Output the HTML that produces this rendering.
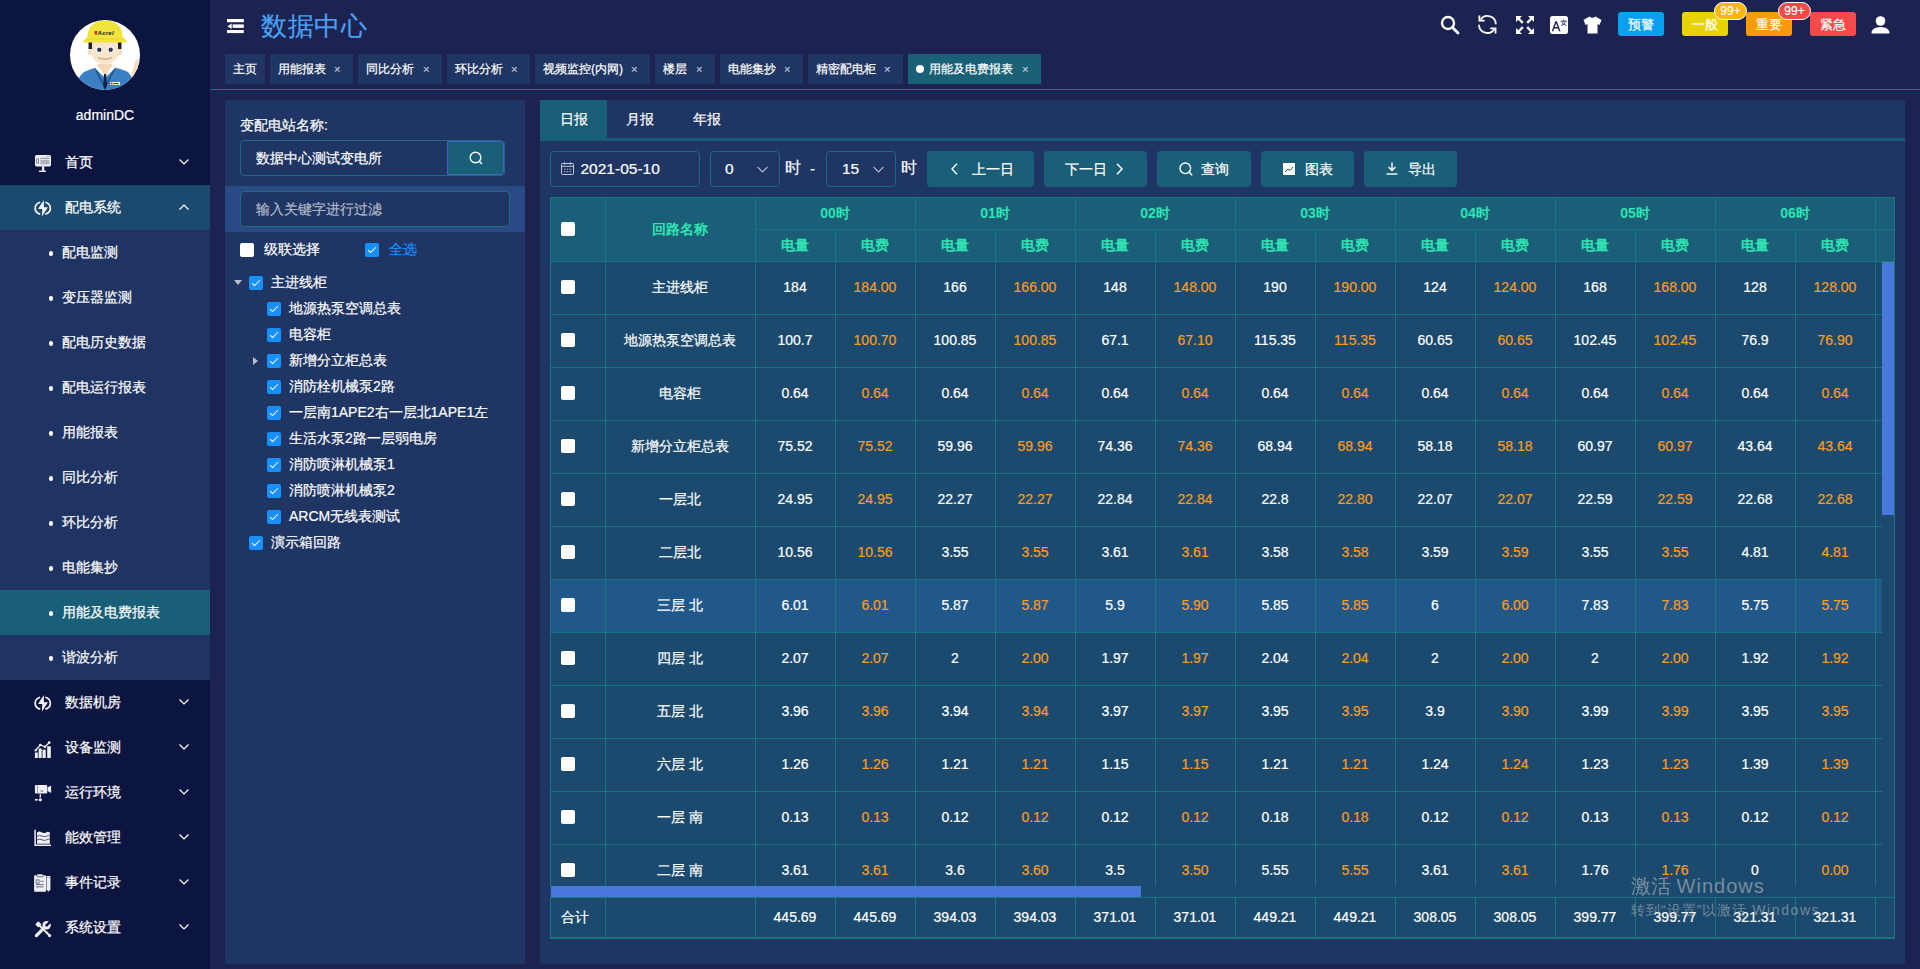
<!DOCTYPE html>
<html><head><meta charset="utf-8"><title>数据中心</title><style>
*{margin:0;padding:0;box-sizing:border-box}
html,body{width:1920px;height:969px;overflow:hidden}
body{background:#1d2350;-webkit-text-stroke:0.2px currentColor;font-family:"Liberation Sans",sans-serif;color:#fff;position:relative;font-size:14px}
.a{position:absolute}
.side{left:0;top:0;width:210px;height:969px;background:#0c1440}
.mi{position:absolute;left:0;width:210px;height:45px;line-height:45px;font-size:14px;color:#fff}
.mi .ic{position:absolute;left:34px;top:14px;width:18px;height:18px}
.mi .tx{position:absolute;left:65px;top:0}
.mi .cv{position:absolute;left:179px;top:19px;width:10px;height:6px}
.sub{position:absolute;left:0;width:210px;height:45px;line-height:45px;font-size:14px;color:#fff}
.sub .dot{position:absolute;left:48.6px;top:21.4px;width:4.6px;height:4.6px;border-radius:50%;background:#fff}
.sub .tx{position:absolute;left:62px;top:0}
.tab{position:absolute;top:54px;height:30px;line-height:30px;background:#1f3564;font-size:12px;color:#fff;padding-left:8px;white-space:nowrap}
.tab .x{position:absolute;top:0;font-size:11px;color:#c8cedc}
.hbtn{position:absolute;top:12px;height:24px;line-height:24px;padding-top:1px;border-radius:3px;font-size:13px;color:#fff;text-align:center;width:46px}
.badge{position:absolute;top:2px;height:18px;line-height:16px;border-radius:9px;border:1px solid #fff;font-size:12px;color:#fff;text-align:center;width:33px}
.panel{background:#1f3564;border-radius:2px}
.inp{position:absolute;border:1px solid #1a6e7c;border-radius:4px;background:#1f3564}
.cb{position:absolute;width:14px;height:14px;border-radius:2px;background:#fff}
.cbc{position:absolute;width:14px;height:14px;border-radius:2px;background:#1890ff}
.cbc:after{content:"";position:absolute;left:4.8px;top:1.9px;width:3px;height:7px;border:solid #fff;border-width:0 1px 1px 0;transform:rotate(45deg)}
.tr{position:absolute;font-size:14px;line-height:26px;height:26px;color:#fff;white-space:nowrap}
.btn{position:absolute;top:151px;height:36px;line-height:36px;background:#1a5f78;border-radius:4px;font-size:14px;color:#fff}
.g{position:absolute;background:#18747f}
.cell{position:absolute;text-align:center;font-size:14px;white-space:nowrap}
.wm{-webkit-text-stroke:0}</style></head>
<body>
<div class="a side">
<svg class="a" style="left:70px;top:20px" width="70" height="70" viewBox="0 0 70 70">
<defs><clipPath id="cc"><circle cx="35" cy="35" r="35"/></clipPath></defs>
<circle cx="35" cy="35" r="35" fill="#fff"/>
<g clip-path="url(#cc)">
<path d="M61 57 Q63 46 66 40 Q70 38 70 44 L70 60 Z" fill="#f6dcc0"/>
<path d="M4 75 Q6 58 14 52 Q22 48 30 47 L35 52 L40 47 Q50 48 58 52 Q64 58 66 75 Z" fill="#3b80c4"/>
<path d="M25 48 L34 66 M45 48 L36 66" stroke="#22508a" stroke-width="1.6" fill="none"/>
<path d="M27.5 44 H42 V49 L35 55 L27.5 49 Z" fill="#f6d9b8"/>
<path d="M25 48 L27.5 46 L35 55 L42.5 46 L45 48 L35 58 Z" fill="#fff"/>
<path d="M34 54 H36.2 L37 66 L35 70 L33.2 66 Z" fill="#142040"/>
<rect x="40" y="62" width="10" height="3" fill="#fff"/><rect x="40.5" y="62.5" width="2" height="2" fill="#e02020"/><rect x="43" y="63" width="6" height="1.2" fill="#555"/>
<ellipse cx="20" cy="32" rx="2.2" ry="3.2" fill="#f6dcc0"/><ellipse cx="50" cy="32" rx="2.2" ry="3.2" fill="#f6dcc0"/>
<path d="M19.5 22 Q19.5 44 35 44 Q50.5 44 50.5 22 Z" fill="#f9e5cc"/>
<rect x="18.5" y="22" width="3.5" height="7" fill="#222"/><rect x="48" y="22" width="3.5" height="7" fill="#222"/>
<circle cx="29" cy="29.5" r="3" fill="#fff"/><circle cx="41" cy="29.5" r="3" fill="#fff"/>
<circle cx="29.3" cy="29.8" r="2.2" fill="#2c3a55"/><circle cx="40.7" cy="29.8" r="2.2" fill="#2c3a55"/>
<path d="M28 37.5 Q35 41 42 37.5" stroke="#a06a4a" stroke-width="0.7" fill="none"/>
<path d="M17 20 Q17 0.5 35 0.5 Q53 0.5 53 20 Z" fill="#f1e43c"/>
<path d="M13 22.5 Q14 17.5 20 17.5 H50 Q56 17.5 57 22.5 Z" fill="#f1e43c"/>
<path d="M16 19 H54" stroke="#d8c830" stroke-width=".6"/>
<path d="M24.5 11 L27.5 11 L26.5 15 L24.5 14 Z" fill="#e02828"/>
<text x="27.6" y="15.2" font-family="Liberation Sans" font-size="6" font-weight="bold" font-style="italic" fill="#222" textLength="16" style="-webkit-text-stroke:0">Acrel</text>
</g></svg>
<div class="a" style="left:0;top:105px;width:210px;text-align:center;font-size:14px;line-height:20px">adminDC</div>
<div class="mi" style="top:140px"><svg class="ic" viewBox="0 0 18 18"><rect x="1" y="1" width="16" height="11.4" rx="1.6" fill="#f0f0f4"/><rect x="2.6" y="4.6" width="1.9" height="4.8" rx=".5" fill="none" stroke="#0c1440" stroke-width=".7" opacity=".7"/><path d="M6.3 4.3h9.2" stroke="#0c1440" stroke-width=".8" opacity=".6"/><rect x="6.3" y="5.8" width="9.2" height="4.6" fill="#0c1440" opacity=".28"/><circle cx="13.3" cy="2.6" r=".5" fill="#0c1440" opacity=".6"/><circle cx="15" cy="2.6" r=".5" fill="#0c1440" opacity=".6"/><rect x="8" y="12.4" width="2.2" height="4.3" fill="#f0f0f4"/><rect x="4.8" y="16.4" width="7.4" height="1.6" rx=".8" fill="#f0f0f4"/></svg><span class="tx">首页</span><svg class="cv" viewBox="0 0 10 6"><path d="M0.5 0.5 L5 5 L9.5 0.5" stroke="#fff" stroke-width="1.2" fill="none"/></svg></div>
<div class="mi" style="top:185px;background:#1b4a6e"><svg class="ic" style="top:15px" viewBox="0 0 18 18"><path d="M6.2 2.27A7.6 6.3 0 0 0 6.2 14.13" stroke="#f4f4f8" stroke-width="1.7" fill="none"/><path d="M11.3 2.27A7.6 6.3 0 0 1 11.3 14.13" stroke="#f4f4f8" stroke-width="1.7" fill="none"/><path d="M9.8 0 L4 8.9 H8.3 L7.8 16.8 L13.9 7.3 H9.9 Z" fill="#f4f4f8"/></svg><span class="tx">配电系统</span><svg class="cv" viewBox="0 0 10 6"><path d="M0.5 5.5 L5 1 L9.5 5.5" stroke="#fff" stroke-width="1.2" fill="none"/></svg></div>
<div class="a" style="left:0;top:230px;width:210px;height:450px;background:#1f3463"></div>
<div class="sub" style="top:230px;"><span class="dot"></span><span class="tx">配电监测</span></div>
<div class="sub" style="top:275px;"><span class="dot"></span><span class="tx">变压器监测</span></div>
<div class="sub" style="top:320px;"><span class="dot"></span><span class="tx">配电历史数据</span></div>
<div class="sub" style="top:365px;"><span class="dot"></span><span class="tx">配电运行报表</span></div>
<div class="sub" style="top:410px;"><span class="dot"></span><span class="tx">用能报表</span></div>
<div class="sub" style="top:455px;"><span class="dot"></span><span class="tx">同比分析</span></div>
<div class="sub" style="top:500px;"><span class="dot"></span><span class="tx">环比分析</span></div>
<div class="sub" style="top:545px;"><span class="dot"></span><span class="tx">电能集抄</span></div>
<div class="sub" style="top:590px;background:#195f77;"><span class="dot"></span><span class="tx">用能及电费报表</span></div>
<div class="sub" style="top:635px;"><span class="dot"></span><span class="tx">谐波分析</span></div>
<div class="mi" style="top:680px"><svg class="ic" style="top:15px" viewBox="0 0 18 18"><path d="M6.2 2.27A7.6 6.3 0 0 0 6.2 14.13" stroke="#f4f4f8" stroke-width="1.7" fill="none"/><path d="M11.3 2.27A7.6 6.3 0 0 1 11.3 14.13" stroke="#f4f4f8" stroke-width="1.7" fill="none"/><path d="M9.8 0 L4 8.9 H8.3 L7.8 16.8 L13.9 7.3 H9.9 Z" fill="#f4f4f8"/></svg><span class="tx">数据机房</span><svg class="cv" viewBox="0 0 10 6"><path d="M0.5 0.5 L5 5 L9.5 0.5" stroke="#fff" stroke-width="1.2" fill="none"/></svg></div>
<div class="mi" style="top:725px"><svg class="ic" style="top:15px" viewBox="0 0 18 18"><rect x="0.9" y="12.5" width="2.9" height="5.5" fill="#f0f0f4"/><rect x="4.6" y="8.5" width="3.1" height="9.5" fill="#f0f0f4"/><rect x="8.5" y="9.6" width="3.2" height="8.4" fill="#f0f0f4"/><rect x="13.2" y="6.3" width="3.6" height="11.7" fill="#f0f0f4"/><path d="M1.6 10.3 L6.3 5 L11 6.8 L15.2 2.8" stroke="#f0f0f4" stroke-width="1.3" fill="none"/><circle cx="1.8" cy="10.2" r="1.2" fill="#f0f0f4"/><circle cx="6.3" cy="5" r="1.3" fill="#f0f0f4"/><circle cx="11" cy="6.8" r="1.3" fill="#f0f0f4"/><circle cx="15.2" cy="2.6" r="1.4" fill="#f0f0f4"/></svg><span class="tx">设备监测</span><svg class="cv" viewBox="0 0 10 6"><path d="M0.5 0.5 L5 5 L9.5 0.5" stroke="#fff" stroke-width="1.2" fill="none"/></svg></div>
<div class="mi" style="top:770px"><svg class="ic" viewBox="0 0 18 18"><rect x="0.9" y="1" width="12.3" height="8.4" rx="1.2" fill="#f0f0f4"/><path d="M3.4 1.5v7.4" stroke="#0c1440" stroke-width=".6" opacity=".7"/><rect x="6.6" y="6.6" width="2.6" height=".9" fill="#0c1440" opacity=".7"/><path d="M13.6 3.6 L17.1 1.4 V9.1 L13.6 7.1 Z" fill="#f0f0f4"/><rect x="5.6" y="10.2" width="1.4" height="3.4" fill="#f0f0f4"/><circle cx="6.3" cy="15.8" r="1.6" fill="#f0f0f4"/><rect x="0.9" y="15" width="2.9" height="1.6" fill="#f0f0f4"/></svg><span class="tx">运行环境</span><svg class="cv" viewBox="0 0 10 6"><path d="M0.5 0.5 L5 5 L9.5 0.5" stroke="#fff" stroke-width="1.2" fill="none"/></svg></div>
<div class="mi" style="top:815px"><svg class="ic" viewBox="0 0 18 18"><path d="M1.1 0.8 V16.3 H17" stroke="#f0f0f4" stroke-width="1.5" fill="none"/><path d="M3 3.6 Q5.2 1.8 7.5 3.2 T12 3.4 T15.8 3.4 V14.7 H3 Z" fill="#f0f0f4"/><path d="M3 7.4 Q5.5 5.6 8 7 T12.5 7.2 T15.8 6.8" stroke="#0c1440" stroke-width=".9" fill="none" opacity=".75"/><path d="M3 11 Q5.5 9.4 8 10.8 T12.5 10.8 T15.8 10.4" stroke="#0c1440" stroke-width=".9" fill="none" opacity=".75"/></svg><span class="tx">能效管理</span><svg class="cv" viewBox="0 0 10 6"><path d="M0.5 0.5 L5 5 L9.5 0.5" stroke="#fff" stroke-width="1.2" fill="none"/></svg></div>
<div class="mi" style="top:860px"><svg class="ic" viewBox="0 0 18 18"><rect x="0.1" y="1.3" width="11.9" height="16.4" rx="1" fill="#f0f0f4"/><rect x="2.8" y="0" width="6.4" height="2.8" rx="1" fill="#f0f0f4" stroke="#0c1440" stroke-width=".6"/><rect x="2.1" y="5.9" width="2.9" height="3.3" fill="none" stroke="#0c1440" stroke-width=".8" opacity=".7"/><path d="M6.3 7.3h3.3M2.1 10.7h7.5M2.1 12.9h7.5" stroke="#0c1440" stroke-width=".9" opacity=".7"/><path d="M12.5 1.9 H16.4 V15.4 L14.45 17.8 L12.5 15.4 Z" fill="#f0f0f4"/><path d="M12.5 3.3 H16.4" stroke="#0c1440" stroke-width=".5" opacity=".6"/></svg><span class="tx">事件记录</span><svg class="cv" viewBox="0 0 10 6"><path d="M0.5 0.5 L5 5 L9.5 0.5" stroke="#fff" stroke-width="1.2" fill="none"/></svg></div>
<div class="mi" style="top:905px"><svg class="ic" style="top:15px" viewBox="0 0 18 18"><path d="M2.4 15.6 L10.6 7.4" stroke="#f0f0f4" stroke-width="3.2" stroke-linecap="round"/><circle cx="12.6" cy="5.3" r="4.2" fill="#f0f0f4"/><path d="M12.6 5.3 L16.8 1.1" stroke="#0c1440" stroke-width="2.6" stroke-linecap="round"/><path d="M1.2 4.3 L4.3 1.2 L7.4 4.3 L4.3 7.4 Z" fill="#f0f0f4"/><path d="M5 5 L13.4 13.4" stroke="#f0f0f4" stroke-width="2"/><path d="M11.6 13.2 L13.2 11.6 L16.8 15.6 L15.6 16.8 Z" fill="#f0f0f4"/><circle cx="15.6" cy="15.6" r="1.6" fill="#f0f0f4"/></svg><span class="tx">系统设置</span><svg class="cv" viewBox="0 0 10 6"><path d="M0.5 0.5 L5 5 L9.5 0.5" stroke="#fff" stroke-width="1.2" fill="none"/></svg></div>
</div>
<svg class="a" style="left:227px;top:19px" width="17" height="15" viewBox="0 0 17 15"><rect x="0" y="0" width="16.8" height="3.2" fill="#fff"/><rect x="5.6" y="5.4" width="11.2" height="3.5" fill="#fff"/><rect x="0" y="11" width="16.8" height="3.1" fill="#fff"/><path d="M0.4 7.2 L4.7 4.4 V10 Z" fill="#fff"/></svg>
<div class="a" style="left:261px;top:8px;font-size:26px;line-height:36px;color:#4aa0f2;letter-spacing:0.6px">数据中心</div>
<svg class="a" style="left:1440px;top:15px" width="20" height="20" viewBox="0 0 20 20"><circle cx="8" cy="8" r="6" stroke="#fff" stroke-width="2.4" fill="none"/><path d="M12.5 12.5 L18 18" stroke="#fff" stroke-width="2.8" stroke-linecap="round"/></svg>
<svg class="a" style="left:1477px;top:14px" width="21" height="21" viewBox="0 0 21 21"><path d="M3.6 5.6 A8.3 8.3 0 0 1 18.8 10.3" stroke="#fff" stroke-width="1.8" fill="none"/><path d="M2 10.7 A8.3 8.3 0 0 0 17.2 15.2" stroke="#fff" stroke-width="1.8" fill="none"/><path d="M2.4 1.4 V6.6 H7.6" stroke="#fff" stroke-width="1.8" fill="none"/><path d="M18.5 19.6 V14.4 H13.3" stroke="#fff" stroke-width="1.8" fill="none"/></svg>
<svg class="a" style="left:1516px;top:16px" width="18" height="18" viewBox="0 0 18 18"><g fill="#fff"><path d="M0 0 H6 L0 6 Z"/><path d="M18 0 V6 L12 0 Z"/><path d="M0 18 V12 L6 18 Z"/><path d="M18 18 H12 L18 12 Z"/></g><g stroke="#fff" stroke-width="2.4"><path d="M2 2 L6.8 6.8"/><path d="M16 2 L11.2 6.8"/><path d="M2 16 L6.8 11.2"/><path d="M16 16 L11.2 11.2"/></g></svg>
<svg class="a" style="left:1550px;top:16px" width="18" height="18" viewBox="0 0 18 18"><rect x="0" y="0" width="18" height="18" rx="2.5" fill="#fff"/><path d="M1.8 15.2 L5.4 5.2 H6.9 L10.5 15.2 H9 L8 12.4 H4.3 L3.3 15.2 Z M4.8 11 H7.5 L6.15 7.2 Z" fill="#1d2350"/><path d="M10.6 5.2 H16.9 M13.75 3.6 V5.2 M11.6 5.6 Q13 8.6 16.4 9.6 M15.6 5.6 Q14.4 8.6 11 9.6" stroke="#1d2350" stroke-width=".85" fill="none"/></svg>
<svg class="a" style="left:1583px;top:16px" width="19" height="18" viewBox="0 0 19 18"><path d="M6.5 0.5 Q9.5 3 12.5 0.5 L18.5 4 L16.5 9 L14.5 8 V17.5 H4.5 V8 L2.5 9 L0.5 4 Z" fill="#fff"/></svg>
<div class="hbtn" style="left:1618px;background:#06a0ee">预警</div>
<div class="hbtn" style="left:1682px;background:#e8d200">一般</div>
<div class="hbtn" style="left:1746px;background:#fb9b0b">重要</div>
<div class="hbtn" style="left:1810px;background:#f64a4a">紧急</div>
<div class="badge" style="left:1714px;background:#fbb60a">99+</div>
<div class="badge" style="left:1778px;background:#f44949">99+</div>
<svg class="a" style="left:1871px;top:16px" width="19" height="18" viewBox="0 0 19 18"><circle cx="9.5" cy="5" r="4.8" fill="#fff"/><path d="M0.5 17.5 Q0.5 11 9.5 11 Q18.5 11 18.5 17.5 Z" fill="#fff"/></svg>
<div class="tab" style="left:225px;width:40px">主页</div>
<div class="tab" style="left:270px;width:83px">用能报表<span class="x" style="left:64px">×</span></div>
<div class="tab" style="left:358px;width:84px">同比分析<span class="x" style="left:65px">×</span></div>
<div class="tab" style="left:447px;width:83px">环比分析<span class="x" style="left:64px">×</span></div>
<div class="tab" style="left:535px;width:115px">视频监控(内网)<span class="x" style="left:96px">×</span></div>
<div class="tab" style="left:655px;width:60px">楼层<span class="x" style="left:41px">×</span></div>
<div class="tab" style="left:720px;width:83px">电能集抄<span class="x" style="left:64px">×</span></div>
<div class="tab" style="left:808px;width:95px">精密配电柜<span class="x" style="left:76px">×</span></div>
<div class="tab" style="left:908px;width:133px;background:#1a6178;padding-left:21px"><span class="a" style="left:8px;top:11px;width:8px;height:8px;border-radius:50%;background:#fff"></span>用能及电费报表<span class="x" style="left:114px">×</span></div>
<div class="a" style="left:210px;top:89px;width:1710px;height:1px;background:#177482"></div>
<div class="a panel" style="left:225px;top:100px;width:300px;height:864px"></div>
<div class="a" style="left:240px;top:115px;font-size:14px;line-height:20px">变配电站名称:</div>
<div class="inp" style="left:240px;top:140px;width:265px;height:36px;border-color:#1a6e7c"></div>
<div class="a" style="left:447px;top:141px;width:57px;height:34px;background:#1a5f78;border:1px solid #4a5fc8;border-radius:0 4px 4px 0"></div>
<svg class="a" style="left:469px;top:151px" width="14" height="14" viewBox="0 0 14 14"><circle cx="6.5" cy="6.5" r="5.3" stroke="#fff" stroke-width="1.4" fill="none"/><path d="M10.3 10.3 L13 13" stroke="#fff" stroke-width="1.4"/></svg>
<div class="a" style="left:256px;top:148px;font-size:14px;line-height:20px">数据中心测试变电所</div>
<div class="a" style="left:225px;top:186px;width:300px;height:46px;background:#2a4a85"></div>
<div class="inp" style="left:240px;top:191px;width:270px;height:36px;background:#1f3564"></div>
<div class="a" style="left:256px;top:199px;font-size:14px;line-height:20px;color:#b4bac8">输入关键字进行过滤</div>
<div class="cb" style="left:240px;top:243px"></div>
<div class="tr" style="left:264px;top:236px">级联选择</div>
<div class="cbc" style="left:365px;top:243px"></div>
<div class="tr" style="left:389px;top:236px;color:#1890ff">全选</div>
<svg class="a" style="left:234px;top:280px" width="8" height="6" viewBox="0 0 8 6"><path d="M0 0 H8 L4 5 Z" fill="#b8bcc8"/></svg>
<div class="cbc" style="left:249px;top:276px"></div><div class="tr" style="left:271px;top:269px">主进线柜</div>
<div class="cbc" style="left:267px;top:302px"></div><div class="tr" style="left:289px;top:295px">地源热泵空调总表</div>
<div class="cbc" style="left:267px;top:328px"></div><div class="tr" style="left:289px;top:321px">电容柜</div>
<svg class="a" style="left:253px;top:357px" width="6" height="8" viewBox="0 0 6 8"><path d="M0 0 V8 L5 4 Z" fill="#b8bcc8"/></svg>
<div class="cbc" style="left:267px;top:354px"></div><div class="tr" style="left:289px;top:347px">新增分立柜总表</div>
<div class="cbc" style="left:267px;top:380px"></div><div class="tr" style="left:289px;top:373px">消防栓机械泵2路</div>
<div class="cbc" style="left:267px;top:406px"></div><div class="tr" style="left:289px;top:399px">一层南1APE2右一层北1APE1左</div>
<div class="cbc" style="left:267px;top:432px"></div><div class="tr" style="left:289px;top:425px">生活水泵2路一层弱电房</div>
<div class="cbc" style="left:267px;top:458px"></div><div class="tr" style="left:289px;top:451px">消防喷淋机械泵1</div>
<div class="cbc" style="left:267px;top:484px"></div><div class="tr" style="left:289px;top:477px">消防喷淋机械泵2</div>
<div class="cbc" style="left:267px;top:510px"></div><div class="tr" style="left:289px;top:503px">ARCM无线表测试</div>
<div class="cbc" style="left:249px;top:536px"></div><div class="tr" style="left:271px;top:529px">演示箱回路</div>
<div class="a panel" style="left:540px;top:100px;width:1365px;height:864px"></div>
<div class="a" style="left:540px;top:100px;width:67px;height:38px;background:#195e78"></div>
<div class="a" style="left:540px;top:138px;width:1365px;height:3px;background:#195e78"></div>
<div class="a" style="left:560px;top:109px;font-size:14px;line-height:20px">日报</div>
<div class="a" style="left:626px;top:109px;font-size:14px;line-height:20px">月报</div>
<div class="a" style="left:693px;top:109px;font-size:14px;line-height:20px">年报</div>
<div class="inp" style="left:550px;top:151px;width:150px;height:36px;border-color:#176d7a"></div>
<svg class="a" style="left:561px;top:162px" width="13" height="13" viewBox="0 0 13 13"><rect x="0.5" y="1.5" width="12" height="11" rx="0.8" stroke="#c4c8d4" stroke-width="1" fill="none"/><path d="M0.5 4.3h12" stroke="#c4c8d4" stroke-width="1"/><path d="M3.6 0.3v2.4M9.4 0.3v2.4" stroke="#c4c8d4" stroke-width="1"/><path d="M3 7.2h1.4M5.8 7.2h1.4M8.6 7.2h1.4M3 9.6h1.4M5.8 9.6h1.4M8.6 9.6h1.4" stroke="#c4c8d4" stroke-width=".9"/></svg>
<div class="a" style="left:580.5px;top:158.5px;font-size:15.5px;line-height:20px">2021-05-10</div>
<div class="inp" style="left:710px;top:151px;width:70px;height:36px;border-color:#176d7a"></div>
<div class="a" style="left:725px;top:158.5px;font-size:15.5px;line-height:20px">0</div>
<svg class="a" style="left:757px;top:166px" width="11" height="7" viewBox="0 0 11 7"><path d="M0.5 0.8 L5.5 5.8 L10.5 0.8" stroke="#b8bcc8" stroke-width="1.2" fill="none"/></svg>
<div class="a" style="left:785px;top:158px;font-size:16px;line-height:20px">时</div>
<div class="a" style="left:810px;top:159px;font-size:15px;line-height:20px">-</div>
<div class="inp" style="left:826px;top:151px;width:70px;height:36px;border-color:#176d7a"></div>
<div class="a" style="left:842px;top:158.5px;font-size:15.5px;line-height:20px">15</div>
<svg class="a" style="left:873px;top:166px" width="11" height="7" viewBox="0 0 11 7"><path d="M0.5 0.8 L5.5 5.8 L10.5 0.8" stroke="#b8bcc8" stroke-width="1.2" fill="none"/></svg>
<div class="a" style="left:901px;top:158px;font-size:16px;line-height:20px">时</div>
<div class="btn" style="left:927px;width:107px"></div><svg class="a" style="left:951px;top:163px" width="7" height="12" viewBox="0 0 7 12"><path d="M6 0.7 L1 6 L6 11.3" stroke="#fff" stroke-width="1.4" fill="none"/></svg><div class="a" style="left:972px;top:159px;font-size:14px;line-height:20px">上一日</div>
<div class="btn" style="left:1044px;width:103px"></div><svg class="a" style="left:1116px;top:163px" width="7" height="12" viewBox="0 0 7 12"><path d="M1 0.7 L6 6 L1 11.3" stroke="#fff" stroke-width="1.4" fill="none"/></svg><div class="a" style="left:1065px;top:159px;font-size:14px;line-height:20px">下一日</div>
<div class="btn" style="left:1157px;width:94px"></div><svg class="a" style="left:1179px;top:162px" width="14" height="14" viewBox="0 0 14 14"><circle cx="6.3" cy="6.3" r="5.3" stroke="#fff" stroke-width="1.4" fill="none"/><path d="M10 10 L13.2 13.2" stroke="#fff" stroke-width="1.5"/></svg><div class="a" style="left:1201px;top:159px;font-size:14px;line-height:20px">查询</div>
<div class="btn" style="left:1261px;width:93px"></div><svg class="a" style="left:1283px;top:163px" width="12" height="12" viewBox="0 0 12 12"><rect x="0" y="0" width="12" height="12" fill="#fff"/><path d="M2 9 L5 6 L7 7.5 L10 4" stroke="#1a5f78" stroke-width="1" fill="none"/></svg><div class="a" style="left:1305px;top:159px;font-size:14px;line-height:20px">图表</div>
<div class="btn" style="left:1364px;width:93px"></div><svg class="a" style="left:1386px;top:162px" width="12" height="13" viewBox="0 0 12 13"><path d="M6 0.5 V8.5 M2.5 5 L6 8.5 L9.5 5" stroke="#fff" stroke-width="1.4" fill="none"/><path d="M0.5 12 H11.5" stroke="#fff" stroke-width="1.4"/></svg><div class="a" style="left:1408px;top:159px;font-size:14px;line-height:20px">导出</div>
<div class="a" style="left:550px;top:197px;width:1345px;height:64px;background:#1a5e78"></div>
<div class="a" style="left:550px;top:261px;width:1345px;height:677px;background:#1b4a6e"></div>
<div class="a" style="left:550px;top:579px;width:1332px;height:53px;background:#21588a"></div>
<div class="g" style="left:550px;top:197px;width:1px;height:689px"></div>
<div class="g" style="left:550px;top:897px;width:1px;height:40px"></div>
<div class="g" style="left:605px;top:197px;width:1px;height:689px"></div>
<div class="g" style="left:605px;top:897px;width:1px;height:40px"></div>
<div class="g" style="left:755px;top:197px;width:1px;height:689px"></div>
<div class="g" style="left:755px;top:897px;width:1px;height:40px"></div>
<div class="g" style="left:835px;top:229px;width:1px;height:657px"></div>
<div class="g" style="left:835px;top:897px;width:1px;height:40px"></div>
<div class="g" style="left:915px;top:197px;width:1px;height:689px"></div>
<div class="g" style="left:915px;top:897px;width:1px;height:40px"></div>
<div class="g" style="left:995px;top:229px;width:1px;height:657px"></div>
<div class="g" style="left:995px;top:897px;width:1px;height:40px"></div>
<div class="g" style="left:1075px;top:197px;width:1px;height:689px"></div>
<div class="g" style="left:1075px;top:897px;width:1px;height:40px"></div>
<div class="g" style="left:1155px;top:229px;width:1px;height:657px"></div>
<div class="g" style="left:1155px;top:897px;width:1px;height:40px"></div>
<div class="g" style="left:1235px;top:197px;width:1px;height:689px"></div>
<div class="g" style="left:1235px;top:897px;width:1px;height:40px"></div>
<div class="g" style="left:1315px;top:229px;width:1px;height:657px"></div>
<div class="g" style="left:1315px;top:897px;width:1px;height:40px"></div>
<div class="g" style="left:1395px;top:197px;width:1px;height:689px"></div>
<div class="g" style="left:1395px;top:897px;width:1px;height:40px"></div>
<div class="g" style="left:1475px;top:229px;width:1px;height:657px"></div>
<div class="g" style="left:1475px;top:897px;width:1px;height:40px"></div>
<div class="g" style="left:1555px;top:197px;width:1px;height:689px"></div>
<div class="g" style="left:1555px;top:897px;width:1px;height:40px"></div>
<div class="g" style="left:1635px;top:229px;width:1px;height:657px"></div>
<div class="g" style="left:1635px;top:897px;width:1px;height:40px"></div>
<div class="g" style="left:1715px;top:197px;width:1px;height:689px"></div>
<div class="g" style="left:1715px;top:897px;width:1px;height:40px"></div>
<div class="g" style="left:1795px;top:229px;width:1px;height:657px"></div>
<div class="g" style="left:1795px;top:897px;width:1px;height:40px"></div>
<div class="g" style="left:1875px;top:197px;width:1px;height:689px"></div>
<div class="g" style="left:1875px;top:897px;width:1px;height:40px"></div>
<div class="g" style="left:1894px;top:197px;width:1px;height:741px"></div>
<div class="g" style="left:550px;top:197px;width:1345px;height:1px"></div>
<div class="g" style="left:755px;top:229px;width:1139px;height:1px"></div>
<div class="g" style="left:550px;top:261px;width:1345px;height:1px"></div>
<div class="g" style="left:550px;top:314px;width:1332px;height:1px"></div>
<div class="g" style="left:550px;top:367px;width:1332px;height:1px"></div>
<div class="g" style="left:550px;top:420px;width:1332px;height:1px"></div>
<div class="g" style="left:550px;top:473px;width:1332px;height:1px"></div>
<div class="g" style="left:550px;top:526px;width:1332px;height:1px"></div>
<div class="g" style="left:550px;top:579px;width:1332px;height:1px"></div>
<div class="g" style="left:550px;top:632px;width:1332px;height:1px"></div>
<div class="g" style="left:550px;top:685px;width:1332px;height:1px"></div>
<div class="g" style="left:550px;top:738px;width:1332px;height:1px"></div>
<div class="g" style="left:550px;top:791px;width:1332px;height:1px"></div>
<div class="g" style="left:550px;top:844px;width:1332px;height:1px"></div>
<div class="g" style="left:550px;top:897px;width:1345px;height:1px"></div>
<div class="g" style="left:550px;top:937px;width:1345px;height:2px"></div>
<div class="a" style="left:1882px;top:262px;width:12px;height:253px;background:#4878dc"></div>
<div class="a" style="left:551px;top:886px;width:590px;height:11px;background:#4878dc"></div>
<div class="cb" style="left:561px;top:222px"></div>
<div class="cell" style="left:605px;top:197px;width:150px;line-height:64px;color:#2ee4b2;font-weight:bold;-webkit-text-stroke:0">回路名称</div>
<div class="cell" style="left:755px;top:197px;width:160px;line-height:32px;color:#2ee4b2;font-weight:bold;-webkit-text-stroke:0">00时</div>
<div class="cell" style="left:755px;top:229px;width:80px;line-height:32px;color:#2ee4b2;font-weight:bold;-webkit-text-stroke:0">电量</div>
<div class="cell" style="left:835px;top:229px;width:80px;line-height:32px;color:#2ee4b2;font-weight:bold;-webkit-text-stroke:0">电费</div>
<div class="cell" style="left:915px;top:197px;width:160px;line-height:32px;color:#2ee4b2;font-weight:bold;-webkit-text-stroke:0">01时</div>
<div class="cell" style="left:915px;top:229px;width:80px;line-height:32px;color:#2ee4b2;font-weight:bold;-webkit-text-stroke:0">电量</div>
<div class="cell" style="left:995px;top:229px;width:80px;line-height:32px;color:#2ee4b2;font-weight:bold;-webkit-text-stroke:0">电费</div>
<div class="cell" style="left:1075px;top:197px;width:160px;line-height:32px;color:#2ee4b2;font-weight:bold;-webkit-text-stroke:0">02时</div>
<div class="cell" style="left:1075px;top:229px;width:80px;line-height:32px;color:#2ee4b2;font-weight:bold;-webkit-text-stroke:0">电量</div>
<div class="cell" style="left:1155px;top:229px;width:80px;line-height:32px;color:#2ee4b2;font-weight:bold;-webkit-text-stroke:0">电费</div>
<div class="cell" style="left:1235px;top:197px;width:160px;line-height:32px;color:#2ee4b2;font-weight:bold;-webkit-text-stroke:0">03时</div>
<div class="cell" style="left:1235px;top:229px;width:80px;line-height:32px;color:#2ee4b2;font-weight:bold;-webkit-text-stroke:0">电量</div>
<div class="cell" style="left:1315px;top:229px;width:80px;line-height:32px;color:#2ee4b2;font-weight:bold;-webkit-text-stroke:0">电费</div>
<div class="cell" style="left:1395px;top:197px;width:160px;line-height:32px;color:#2ee4b2;font-weight:bold;-webkit-text-stroke:0">04时</div>
<div class="cell" style="left:1395px;top:229px;width:80px;line-height:32px;color:#2ee4b2;font-weight:bold;-webkit-text-stroke:0">电量</div>
<div class="cell" style="left:1475px;top:229px;width:80px;line-height:32px;color:#2ee4b2;font-weight:bold;-webkit-text-stroke:0">电费</div>
<div class="cell" style="left:1555px;top:197px;width:160px;line-height:32px;color:#2ee4b2;font-weight:bold;-webkit-text-stroke:0">05时</div>
<div class="cell" style="left:1555px;top:229px;width:80px;line-height:32px;color:#2ee4b2;font-weight:bold;-webkit-text-stroke:0">电量</div>
<div class="cell" style="left:1635px;top:229px;width:80px;line-height:32px;color:#2ee4b2;font-weight:bold;-webkit-text-stroke:0">电费</div>
<div class="cell" style="left:1715px;top:197px;width:160px;line-height:32px;color:#2ee4b2;font-weight:bold;-webkit-text-stroke:0">06时</div>
<div class="cell" style="left:1715px;top:229px;width:80px;line-height:32px;color:#2ee4b2;font-weight:bold;-webkit-text-stroke:0">电量</div>
<div class="cell" style="left:1795px;top:229px;width:80px;line-height:32px;color:#2ee4b2;font-weight:bold;-webkit-text-stroke:0">电费</div>
<div class="a" style="left:550px;top:261px;width:1332px;height:625px;overflow:hidden">
<div class="cb" style="left:11px;top:19px"></div>
<div class="cell" style="left:55px;top:0px;width:150px;line-height:53px">主进线柜</div>
<div class="cell" style="left:205px;top:0px;width:80px;line-height:53px;color:#fff">184</div>
<div class="cell" style="left:285px;top:0px;width:80px;line-height:53px;color:#f89c1e">184.00</div>
<div class="cell" style="left:365px;top:0px;width:80px;line-height:53px;color:#fff">166</div>
<div class="cell" style="left:445px;top:0px;width:80px;line-height:53px;color:#f89c1e">166.00</div>
<div class="cell" style="left:525px;top:0px;width:80px;line-height:53px;color:#fff">148</div>
<div class="cell" style="left:605px;top:0px;width:80px;line-height:53px;color:#f89c1e">148.00</div>
<div class="cell" style="left:685px;top:0px;width:80px;line-height:53px;color:#fff">190</div>
<div class="cell" style="left:765px;top:0px;width:80px;line-height:53px;color:#f89c1e">190.00</div>
<div class="cell" style="left:845px;top:0px;width:80px;line-height:53px;color:#fff">124</div>
<div class="cell" style="left:925px;top:0px;width:80px;line-height:53px;color:#f89c1e">124.00</div>
<div class="cell" style="left:1005px;top:0px;width:80px;line-height:53px;color:#fff">168</div>
<div class="cell" style="left:1085px;top:0px;width:80px;line-height:53px;color:#f89c1e">168.00</div>
<div class="cell" style="left:1165px;top:0px;width:80px;line-height:53px;color:#fff">128</div>
<div class="cell" style="left:1245px;top:0px;width:80px;line-height:53px;color:#f89c1e">128.00</div>
<div class="cb" style="left:11px;top:72px"></div>
<div class="cell" style="left:55px;top:53px;width:150px;line-height:53px">地源热泵空调总表</div>
<div class="cell" style="left:205px;top:53px;width:80px;line-height:53px;color:#fff">100.7</div>
<div class="cell" style="left:285px;top:53px;width:80px;line-height:53px;color:#f89c1e">100.70</div>
<div class="cell" style="left:365px;top:53px;width:80px;line-height:53px;color:#fff">100.85</div>
<div class="cell" style="left:445px;top:53px;width:80px;line-height:53px;color:#f89c1e">100.85</div>
<div class="cell" style="left:525px;top:53px;width:80px;line-height:53px;color:#fff">67.1</div>
<div class="cell" style="left:605px;top:53px;width:80px;line-height:53px;color:#f89c1e">67.10</div>
<div class="cell" style="left:685px;top:53px;width:80px;line-height:53px;color:#fff">115.35</div>
<div class="cell" style="left:765px;top:53px;width:80px;line-height:53px;color:#f89c1e">115.35</div>
<div class="cell" style="left:845px;top:53px;width:80px;line-height:53px;color:#fff">60.65</div>
<div class="cell" style="left:925px;top:53px;width:80px;line-height:53px;color:#f89c1e">60.65</div>
<div class="cell" style="left:1005px;top:53px;width:80px;line-height:53px;color:#fff">102.45</div>
<div class="cell" style="left:1085px;top:53px;width:80px;line-height:53px;color:#f89c1e">102.45</div>
<div class="cell" style="left:1165px;top:53px;width:80px;line-height:53px;color:#fff">76.9</div>
<div class="cell" style="left:1245px;top:53px;width:80px;line-height:53px;color:#f89c1e">76.90</div>
<div class="cb" style="left:11px;top:125px"></div>
<div class="cell" style="left:55px;top:106px;width:150px;line-height:53px">电容柜</div>
<div class="cell" style="left:205px;top:106px;width:80px;line-height:53px;color:#fff">0.64</div>
<div class="cell" style="left:285px;top:106px;width:80px;line-height:53px;color:#f89c1e">0.64</div>
<div class="cell" style="left:365px;top:106px;width:80px;line-height:53px;color:#fff">0.64</div>
<div class="cell" style="left:445px;top:106px;width:80px;line-height:53px;color:#f89c1e">0.64</div>
<div class="cell" style="left:525px;top:106px;width:80px;line-height:53px;color:#fff">0.64</div>
<div class="cell" style="left:605px;top:106px;width:80px;line-height:53px;color:#f89c1e">0.64</div>
<div class="cell" style="left:685px;top:106px;width:80px;line-height:53px;color:#fff">0.64</div>
<div class="cell" style="left:765px;top:106px;width:80px;line-height:53px;color:#f89c1e">0.64</div>
<div class="cell" style="left:845px;top:106px;width:80px;line-height:53px;color:#fff">0.64</div>
<div class="cell" style="left:925px;top:106px;width:80px;line-height:53px;color:#f89c1e">0.64</div>
<div class="cell" style="left:1005px;top:106px;width:80px;line-height:53px;color:#fff">0.64</div>
<div class="cell" style="left:1085px;top:106px;width:80px;line-height:53px;color:#f89c1e">0.64</div>
<div class="cell" style="left:1165px;top:106px;width:80px;line-height:53px;color:#fff">0.64</div>
<div class="cell" style="left:1245px;top:106px;width:80px;line-height:53px;color:#f89c1e">0.64</div>
<div class="cb" style="left:11px;top:178px"></div>
<div class="cell" style="left:55px;top:159px;width:150px;line-height:53px">新增分立柜总表</div>
<div class="cell" style="left:205px;top:159px;width:80px;line-height:53px;color:#fff">75.52</div>
<div class="cell" style="left:285px;top:159px;width:80px;line-height:53px;color:#f89c1e">75.52</div>
<div class="cell" style="left:365px;top:159px;width:80px;line-height:53px;color:#fff">59.96</div>
<div class="cell" style="left:445px;top:159px;width:80px;line-height:53px;color:#f89c1e">59.96</div>
<div class="cell" style="left:525px;top:159px;width:80px;line-height:53px;color:#fff">74.36</div>
<div class="cell" style="left:605px;top:159px;width:80px;line-height:53px;color:#f89c1e">74.36</div>
<div class="cell" style="left:685px;top:159px;width:80px;line-height:53px;color:#fff">68.94</div>
<div class="cell" style="left:765px;top:159px;width:80px;line-height:53px;color:#f89c1e">68.94</div>
<div class="cell" style="left:845px;top:159px;width:80px;line-height:53px;color:#fff">58.18</div>
<div class="cell" style="left:925px;top:159px;width:80px;line-height:53px;color:#f89c1e">58.18</div>
<div class="cell" style="left:1005px;top:159px;width:80px;line-height:53px;color:#fff">60.97</div>
<div class="cell" style="left:1085px;top:159px;width:80px;line-height:53px;color:#f89c1e">60.97</div>
<div class="cell" style="left:1165px;top:159px;width:80px;line-height:53px;color:#fff">43.64</div>
<div class="cell" style="left:1245px;top:159px;width:80px;line-height:53px;color:#f89c1e">43.64</div>
<div class="cb" style="left:11px;top:231px"></div>
<div class="cell" style="left:55px;top:212px;width:150px;line-height:53px">一层北</div>
<div class="cell" style="left:205px;top:212px;width:80px;line-height:53px;color:#fff">24.95</div>
<div class="cell" style="left:285px;top:212px;width:80px;line-height:53px;color:#f89c1e">24.95</div>
<div class="cell" style="left:365px;top:212px;width:80px;line-height:53px;color:#fff">22.27</div>
<div class="cell" style="left:445px;top:212px;width:80px;line-height:53px;color:#f89c1e">22.27</div>
<div class="cell" style="left:525px;top:212px;width:80px;line-height:53px;color:#fff">22.84</div>
<div class="cell" style="left:605px;top:212px;width:80px;line-height:53px;color:#f89c1e">22.84</div>
<div class="cell" style="left:685px;top:212px;width:80px;line-height:53px;color:#fff">22.8</div>
<div class="cell" style="left:765px;top:212px;width:80px;line-height:53px;color:#f89c1e">22.80</div>
<div class="cell" style="left:845px;top:212px;width:80px;line-height:53px;color:#fff">22.07</div>
<div class="cell" style="left:925px;top:212px;width:80px;line-height:53px;color:#f89c1e">22.07</div>
<div class="cell" style="left:1005px;top:212px;width:80px;line-height:53px;color:#fff">22.59</div>
<div class="cell" style="left:1085px;top:212px;width:80px;line-height:53px;color:#f89c1e">22.59</div>
<div class="cell" style="left:1165px;top:212px;width:80px;line-height:53px;color:#fff">22.68</div>
<div class="cell" style="left:1245px;top:212px;width:80px;line-height:53px;color:#f89c1e">22.68</div>
<div class="cb" style="left:11px;top:284px"></div>
<div class="cell" style="left:55px;top:265px;width:150px;line-height:53px">二层北</div>
<div class="cell" style="left:205px;top:265px;width:80px;line-height:53px;color:#fff">10.56</div>
<div class="cell" style="left:285px;top:265px;width:80px;line-height:53px;color:#f89c1e">10.56</div>
<div class="cell" style="left:365px;top:265px;width:80px;line-height:53px;color:#fff">3.55</div>
<div class="cell" style="left:445px;top:265px;width:80px;line-height:53px;color:#f89c1e">3.55</div>
<div class="cell" style="left:525px;top:265px;width:80px;line-height:53px;color:#fff">3.61</div>
<div class="cell" style="left:605px;top:265px;width:80px;line-height:53px;color:#f89c1e">3.61</div>
<div class="cell" style="left:685px;top:265px;width:80px;line-height:53px;color:#fff">3.58</div>
<div class="cell" style="left:765px;top:265px;width:80px;line-height:53px;color:#f89c1e">3.58</div>
<div class="cell" style="left:845px;top:265px;width:80px;line-height:53px;color:#fff">3.59</div>
<div class="cell" style="left:925px;top:265px;width:80px;line-height:53px;color:#f89c1e">3.59</div>
<div class="cell" style="left:1005px;top:265px;width:80px;line-height:53px;color:#fff">3.55</div>
<div class="cell" style="left:1085px;top:265px;width:80px;line-height:53px;color:#f89c1e">3.55</div>
<div class="cell" style="left:1165px;top:265px;width:80px;line-height:53px;color:#fff">4.81</div>
<div class="cell" style="left:1245px;top:265px;width:80px;line-height:53px;color:#f89c1e">4.81</div>
<div class="cb" style="left:11px;top:337px"></div>
<div class="cell" style="left:55px;top:318px;width:150px;line-height:53px">三层 北</div>
<div class="cell" style="left:205px;top:318px;width:80px;line-height:53px;color:#fff">6.01</div>
<div class="cell" style="left:285px;top:318px;width:80px;line-height:53px;color:#f89c1e">6.01</div>
<div class="cell" style="left:365px;top:318px;width:80px;line-height:53px;color:#fff">5.87</div>
<div class="cell" style="left:445px;top:318px;width:80px;line-height:53px;color:#f89c1e">5.87</div>
<div class="cell" style="left:525px;top:318px;width:80px;line-height:53px;color:#fff">5.9</div>
<div class="cell" style="left:605px;top:318px;width:80px;line-height:53px;color:#f89c1e">5.90</div>
<div class="cell" style="left:685px;top:318px;width:80px;line-height:53px;color:#fff">5.85</div>
<div class="cell" style="left:765px;top:318px;width:80px;line-height:53px;color:#f89c1e">5.85</div>
<div class="cell" style="left:845px;top:318px;width:80px;line-height:53px;color:#fff">6</div>
<div class="cell" style="left:925px;top:318px;width:80px;line-height:53px;color:#f89c1e">6.00</div>
<div class="cell" style="left:1005px;top:318px;width:80px;line-height:53px;color:#fff">7.83</div>
<div class="cell" style="left:1085px;top:318px;width:80px;line-height:53px;color:#f89c1e">7.83</div>
<div class="cell" style="left:1165px;top:318px;width:80px;line-height:53px;color:#fff">5.75</div>
<div class="cell" style="left:1245px;top:318px;width:80px;line-height:53px;color:#f89c1e">5.75</div>
<div class="cb" style="left:11px;top:390px"></div>
<div class="cell" style="left:55px;top:371px;width:150px;line-height:53px">四层 北</div>
<div class="cell" style="left:205px;top:371px;width:80px;line-height:53px;color:#fff">2.07</div>
<div class="cell" style="left:285px;top:371px;width:80px;line-height:53px;color:#f89c1e">2.07</div>
<div class="cell" style="left:365px;top:371px;width:80px;line-height:53px;color:#fff">2</div>
<div class="cell" style="left:445px;top:371px;width:80px;line-height:53px;color:#f89c1e">2.00</div>
<div class="cell" style="left:525px;top:371px;width:80px;line-height:53px;color:#fff">1.97</div>
<div class="cell" style="left:605px;top:371px;width:80px;line-height:53px;color:#f89c1e">1.97</div>
<div class="cell" style="left:685px;top:371px;width:80px;line-height:53px;color:#fff">2.04</div>
<div class="cell" style="left:765px;top:371px;width:80px;line-height:53px;color:#f89c1e">2.04</div>
<div class="cell" style="left:845px;top:371px;width:80px;line-height:53px;color:#fff">2</div>
<div class="cell" style="left:925px;top:371px;width:80px;line-height:53px;color:#f89c1e">2.00</div>
<div class="cell" style="left:1005px;top:371px;width:80px;line-height:53px;color:#fff">2</div>
<div class="cell" style="left:1085px;top:371px;width:80px;line-height:53px;color:#f89c1e">2.00</div>
<div class="cell" style="left:1165px;top:371px;width:80px;line-height:53px;color:#fff">1.92</div>
<div class="cell" style="left:1245px;top:371px;width:80px;line-height:53px;color:#f89c1e">1.92</div>
<div class="cb" style="left:11px;top:443px"></div>
<div class="cell" style="left:55px;top:424px;width:150px;line-height:53px">五层 北</div>
<div class="cell" style="left:205px;top:424px;width:80px;line-height:53px;color:#fff">3.96</div>
<div class="cell" style="left:285px;top:424px;width:80px;line-height:53px;color:#f89c1e">3.96</div>
<div class="cell" style="left:365px;top:424px;width:80px;line-height:53px;color:#fff">3.94</div>
<div class="cell" style="left:445px;top:424px;width:80px;line-height:53px;color:#f89c1e">3.94</div>
<div class="cell" style="left:525px;top:424px;width:80px;line-height:53px;color:#fff">3.97</div>
<div class="cell" style="left:605px;top:424px;width:80px;line-height:53px;color:#f89c1e">3.97</div>
<div class="cell" style="left:685px;top:424px;width:80px;line-height:53px;color:#fff">3.95</div>
<div class="cell" style="left:765px;top:424px;width:80px;line-height:53px;color:#f89c1e">3.95</div>
<div class="cell" style="left:845px;top:424px;width:80px;line-height:53px;color:#fff">3.9</div>
<div class="cell" style="left:925px;top:424px;width:80px;line-height:53px;color:#f89c1e">3.90</div>
<div class="cell" style="left:1005px;top:424px;width:80px;line-height:53px;color:#fff">3.99</div>
<div class="cell" style="left:1085px;top:424px;width:80px;line-height:53px;color:#f89c1e">3.99</div>
<div class="cell" style="left:1165px;top:424px;width:80px;line-height:53px;color:#fff">3.95</div>
<div class="cell" style="left:1245px;top:424px;width:80px;line-height:53px;color:#f89c1e">3.95</div>
<div class="cb" style="left:11px;top:496px"></div>
<div class="cell" style="left:55px;top:477px;width:150px;line-height:53px">六层 北</div>
<div class="cell" style="left:205px;top:477px;width:80px;line-height:53px;color:#fff">1.26</div>
<div class="cell" style="left:285px;top:477px;width:80px;line-height:53px;color:#f89c1e">1.26</div>
<div class="cell" style="left:365px;top:477px;width:80px;line-height:53px;color:#fff">1.21</div>
<div class="cell" style="left:445px;top:477px;width:80px;line-height:53px;color:#f89c1e">1.21</div>
<div class="cell" style="left:525px;top:477px;width:80px;line-height:53px;color:#fff">1.15</div>
<div class="cell" style="left:605px;top:477px;width:80px;line-height:53px;color:#f89c1e">1.15</div>
<div class="cell" style="left:685px;top:477px;width:80px;line-height:53px;color:#fff">1.21</div>
<div class="cell" style="left:765px;top:477px;width:80px;line-height:53px;color:#f89c1e">1.21</div>
<div class="cell" style="left:845px;top:477px;width:80px;line-height:53px;color:#fff">1.24</div>
<div class="cell" style="left:925px;top:477px;width:80px;line-height:53px;color:#f89c1e">1.24</div>
<div class="cell" style="left:1005px;top:477px;width:80px;line-height:53px;color:#fff">1.23</div>
<div class="cell" style="left:1085px;top:477px;width:80px;line-height:53px;color:#f89c1e">1.23</div>
<div class="cell" style="left:1165px;top:477px;width:80px;line-height:53px;color:#fff">1.39</div>
<div class="cell" style="left:1245px;top:477px;width:80px;line-height:53px;color:#f89c1e">1.39</div>
<div class="cb" style="left:11px;top:549px"></div>
<div class="cell" style="left:55px;top:530px;width:150px;line-height:53px">一层 南</div>
<div class="cell" style="left:205px;top:530px;width:80px;line-height:53px;color:#fff">0.13</div>
<div class="cell" style="left:285px;top:530px;width:80px;line-height:53px;color:#f89c1e">0.13</div>
<div class="cell" style="left:365px;top:530px;width:80px;line-height:53px;color:#fff">0.12</div>
<div class="cell" style="left:445px;top:530px;width:80px;line-height:53px;color:#f89c1e">0.12</div>
<div class="cell" style="left:525px;top:530px;width:80px;line-height:53px;color:#fff">0.12</div>
<div class="cell" style="left:605px;top:530px;width:80px;line-height:53px;color:#f89c1e">0.12</div>
<div class="cell" style="left:685px;top:530px;width:80px;line-height:53px;color:#fff">0.18</div>
<div class="cell" style="left:765px;top:530px;width:80px;line-height:53px;color:#f89c1e">0.18</div>
<div class="cell" style="left:845px;top:530px;width:80px;line-height:53px;color:#fff">0.12</div>
<div class="cell" style="left:925px;top:530px;width:80px;line-height:53px;color:#f89c1e">0.12</div>
<div class="cell" style="left:1005px;top:530px;width:80px;line-height:53px;color:#fff">0.13</div>
<div class="cell" style="left:1085px;top:530px;width:80px;line-height:53px;color:#f89c1e">0.13</div>
<div class="cell" style="left:1165px;top:530px;width:80px;line-height:53px;color:#fff">0.12</div>
<div class="cell" style="left:1245px;top:530px;width:80px;line-height:53px;color:#f89c1e">0.12</div>
<div class="cb" style="left:11px;top:602px"></div>
<div class="cell" style="left:55px;top:583px;width:150px;line-height:53px">二层 南</div>
<div class="cell" style="left:205px;top:583px;width:80px;line-height:53px;color:#fff">3.61</div>
<div class="cell" style="left:285px;top:583px;width:80px;line-height:53px;color:#f89c1e">3.61</div>
<div class="cell" style="left:365px;top:583px;width:80px;line-height:53px;color:#fff">3.6</div>
<div class="cell" style="left:445px;top:583px;width:80px;line-height:53px;color:#f89c1e">3.60</div>
<div class="cell" style="left:525px;top:583px;width:80px;line-height:53px;color:#fff">3.5</div>
<div class="cell" style="left:605px;top:583px;width:80px;line-height:53px;color:#f89c1e">3.50</div>
<div class="cell" style="left:685px;top:583px;width:80px;line-height:53px;color:#fff">5.55</div>
<div class="cell" style="left:765px;top:583px;width:80px;line-height:53px;color:#f89c1e">5.55</div>
<div class="cell" style="left:845px;top:583px;width:80px;line-height:53px;color:#fff">3.61</div>
<div class="cell" style="left:925px;top:583px;width:80px;line-height:53px;color:#f89c1e">3.61</div>
<div class="cell" style="left:1005px;top:583px;width:80px;line-height:53px;color:#fff">1.76</div>
<div class="cell" style="left:1085px;top:583px;width:80px;line-height:53px;color:#f89c1e">1.76</div>
<div class="cell" style="left:1165px;top:583px;width:80px;line-height:53px;color:#fff">0</div>
<div class="cell" style="left:1245px;top:583px;width:80px;line-height:53px;color:#f89c1e">0.00</div>
</div>
<div class="a" style="left:561px;top:898px;line-height:39px;font-size:14px">合计</div>
<div class="cell" style="left:755px;top:898px;width:80px;line-height:39px">445.69</div>
<div class="cell" style="left:835px;top:898px;width:80px;line-height:39px">445.69</div>
<div class="cell" style="left:915px;top:898px;width:80px;line-height:39px">394.03</div>
<div class="cell" style="left:995px;top:898px;width:80px;line-height:39px">394.03</div>
<div class="cell" style="left:1075px;top:898px;width:80px;line-height:39px">371.01</div>
<div class="cell" style="left:1155px;top:898px;width:80px;line-height:39px">371.01</div>
<div class="cell" style="left:1235px;top:898px;width:80px;line-height:39px">449.21</div>
<div class="cell" style="left:1315px;top:898px;width:80px;line-height:39px">449.21</div>
<div class="cell" style="left:1395px;top:898px;width:80px;line-height:39px">308.05</div>
<div class="cell" style="left:1475px;top:898px;width:80px;line-height:39px">308.05</div>
<div class="cell" style="left:1555px;top:898px;width:80px;line-height:39px">399.77</div>
<div class="cell" style="left:1635px;top:898px;width:80px;line-height:39px">399.77</div>
<div class="cell" style="left:1715px;top:898px;width:80px;line-height:39px">321.31</div>
<div class="cell" style="left:1795px;top:898px;width:80px;line-height:39px">321.31</div>
<div class="a wm" style="left:1631px;top:872px;font-size:20px;line-height:28px;color:rgba(200,200,200,.55)">激活 <span style="letter-spacing:1px">Windows</span></div>
<div class="a wm" style="left:1631px;top:900px;font-size:14px;line-height:20px;color:rgba(200,200,200,.5);letter-spacing:1px">转到“设置”以激活 <span style="letter-spacing:1.6px">Windows</span>。</div>
</body></html>
